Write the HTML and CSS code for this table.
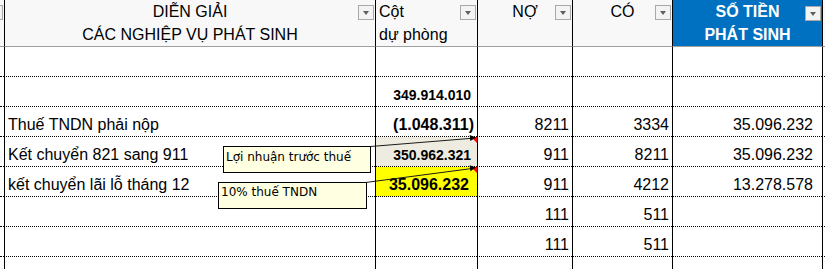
FILE: index.html
```html
<!DOCTYPE html>
<html lang="vi">
<head>
<meta charset="utf-8">
<title>Bảng kê nghiệp vụ</title>
<link rel="stylesheet" href="styles.css">
</head>
<body>
<div class="page">
  <div class="sheet">
    <div class="hc hc-stub"><span class="dd"></span></div>
    <div class="hc hc-center"><div class="htext">DIỄN GIẢI<br>CÁC NGHIỆP VỤ PHÁT SINH</div><span class="dd"></span></div>
    <div class="hc hc-left"><div class="htext">Cột<br>dự phòng</div><span class="dd"></span></div>
    <div class="hc hc-center"><div class="htext">NỢ</div><span class="dd"></span></div>
    <div class="hc hc-center"><div class="htext">CÓ</div><span class="dd"></span></div>
    <div class="hc hc-center hc-blue"><div class="htext">SỐ TIỀN<br>PHÁT SINH</div><span class="dd dd-blue"></span></div>
    <div class="hc hc-end"></div>

    <div class="c first"></div><div class="c txt"></div><div class="c bold"></div><div class="c num"></div><div class="c num"></div><div class="c amt"></div><div class="c end"></div>

    <div class="c first"></div><div class="c txt"></div><div class="c bold small pos">349.914.010</div><div class="c num"></div><div class="c num"></div><div class="c amt"></div><div class="c end"></div>

    <div class="c first"></div><div class="c txt">Thuế TNDN phải nộp</div><div class="c bold neg">(1.048.311)</div><div class="c num">8211</div><div class="c num">3334</div><div class="c amt">35.096.232</div><div class="c end"></div>

    <div class="c first"></div><div class="c txt">Kết chuyển 821 sang 911</div><div class="c bold small pos beige">350.962.321</div><div class="c num">911</div><div class="c num">8211</div><div class="c amt">35.096.232</div><div class="c end"></div>

    <div class="c first"></div><div class="c txt">kết chuyển lãi lỗ tháng 12</div><div class="c bold pos16 yellow">35.096.232</div><div class="c num">911</div><div class="c num">4212</div><div class="c amt">13.278.578</div><div class="c end"></div>

    <div class="c first"></div><div class="c txt"></div><div class="c bold"></div><div class="c num">111</div><div class="c num">511</div><div class="c amt"></div><div class="c end"></div>

    <div class="c first"></div><div class="c txt"></div><div class="c bold"></div><div class="c num">111</div><div class="c num">511</div><div class="c amt"></div><div class="c end"></div>

    <div class="c first"></div><div class="c txt"></div><div class="c bold"></div><div class="c num"></div><div class="c num"></div><div class="c amt"></div><div class="c end"></div>
  </div>

  <div class="note note-1">Lợi nhuận trước thuế</div>
  <div class="note note-2">10% thuế TNDN</div>

  <svg class="callouts" width="825" height="269" viewBox="0 0 825 269" aria-hidden="true">
    <polygon points="471,137 477,137 477,143" fill="#ff0000"/>
    <polygon points="471,167 477,167 477,173" fill="#ff0000"/>
    <line x1="370.5" y1="146.5" x2="472" y2="138.3" stroke="#1a1a1a" stroke-width="1"/>
    <line x1="365.5" y1="182.5" x2="472" y2="168.5" stroke="#1a1a1a" stroke-width="1"/>
    <polygon points="476,137.5 470.3,141 469.7,135" fill="#000"/>
    <polygon points="476,167.5 470.4,171.2 469.6,165.3" fill="#000"/>
  </svg>
</div>
</body>
</html>
```

FILE: styles.css
```css
html, body {
  margin: 0;
  padding: 0;
  background: #ffffff;
}

body {
  width: 825px;
  height: 269px;
  overflow: hidden;
  font-family: "Liberation Sans", Arial, sans-serif;
  font-size: 16px;
  color: #000;
}

.page {
  position: relative;
  width: 825px;
  height: 269px;
  overflow: hidden;
}

.sheet {
  display: grid;
  grid-template-columns: 4px 371px 102px 95px 100px 150px 3px;
}

/* header cells */
.hc {
  display: grid;
  height: 47px;
  box-sizing: border-box;
  border-left: 1px solid #000;
  border-bottom: 1px solid #a0a0a0;
  background: #f8f8f8;
  line-height: 23px;
}

.hc > * {
  grid-area: 1 / 1;
}

.hc-center .htext {
  text-align: center;
}

.hc-left .htext {
  text-align: left;
  padding-left: 3px;
}

.hc-blue {
  background: #0070c0;
  color: #ffffff;
  font-weight: bold;
}

.hc-stub {
  display: flex;
  border-left: none;
  overflow: hidden;
}

.hc-stub .dd {
  flex-shrink: 0;
  margin: 5px 0 0 -13px;
}

.hc-end {
  background: #f8f8f8;
}

.dd {
  justify-self: end;
  align-self: start;
  width: 16px;
  height: 15px;
  margin: 5px 1px 0 0;
  box-sizing: border-box;
  border: 1px solid #a9a9a9;
  background: #f3f3f3;
  display: flex;
  align-items: center;
  justify-content: center;
}

.dd-blue {
  margin-top: 6px;
}

.dd::after {
  content: "";
  width: 0;
  height: 0;
  border-left: 3px solid transparent;
  border-right: 3px solid transparent;
  border-top: 4px solid #5f5f5f;
  margin-top: 1px;
}

/* body cells */
.c {
  height: 30px;
  box-sizing: border-box;
  border-left: 1px solid #000;
  border-bottom: 1px dotted #000;
  display: flex;
  align-items: flex-end;
  justify-content: flex-end;
  padding: 0 3px 2px 3px;
  line-height: 18px;
  white-space: nowrap;
  background: #ffffff;
}

.c.first {
  border-left: none;
  padding: 0;
}

.c.end {
  padding: 0;
}

.c.txt {
  justify-content: flex-start;
  padding-left: 3px;
}

.c.bold {
  font-weight: bold;
}

.c.small {
  font-size: 14px;
}

.c.pos {
  padding-right: 6px;
}

.c.pos16 {
  padding-right: 8px;
}

.c.neg {
  padding-right: 3px;
}

.c.amt {
  padding-right: 9px;
}

.c.beige {
  background: #eeece1;
}

.c.yellow {
  background: #ffff00;
}

/* comment notes */
.note {
  position: absolute;
  box-sizing: border-box;
  width: 148px;
  height: 27px;
  border: 1px solid #000;
  background: #ffffe1;
  font-family: "DejaVu Sans", Verdana, sans-serif;
  font-size: 12px;
  line-height: 14px;
  padding-left: 2px;
  white-space: nowrap;
}

.note-1 {
  left: 223px;
  top: 146px;
  padding-top: 3px;
}

.note-2 {
  left: 218px;
  top: 182px;
  width: 149px;
  padding-top: 2px;
}

.callouts {
  position: absolute;
  left: 0;
  top: 0;
  pointer-events: none;
}
```
